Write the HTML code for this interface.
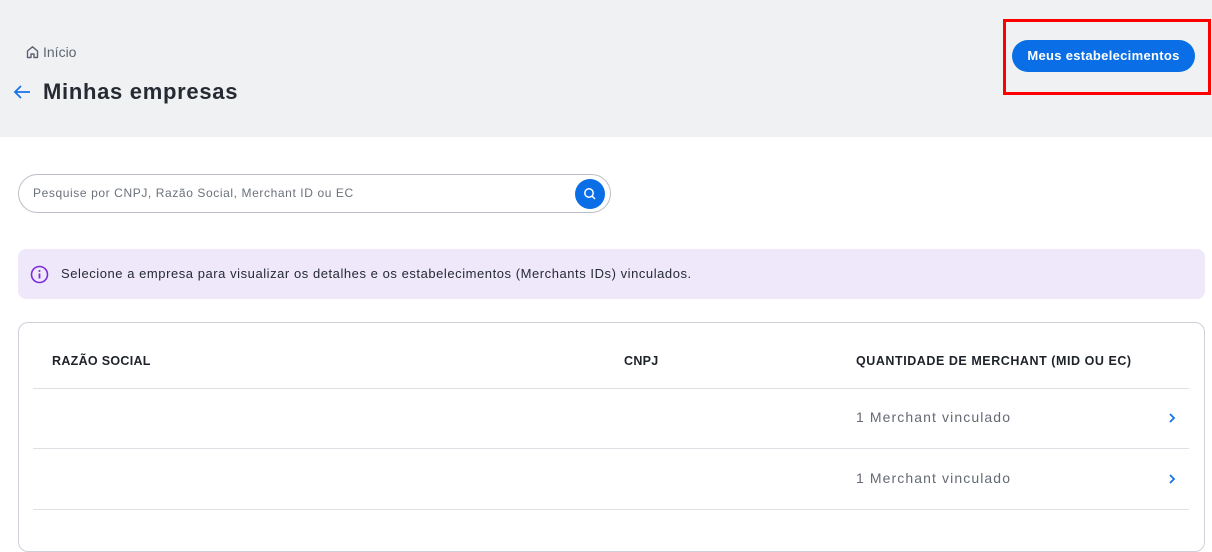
<!DOCTYPE html>
<html><head><meta charset="utf-8"><style>
*{box-sizing:border-box;margin:0;padding:0}
body{width:1212px;height:525px;overflow:hidden;background:#fff;font-family:"Liberation Sans",sans-serif;position:relative}
.hdr{position:absolute;left:0;top:0;width:1212px;height:137px;background:#f0f1f3}
.abs{position:absolute;white-space:nowrap}
</style></head><body>
<div class="hdr"></div>
<svg class="abs" style="left:26px;top:45px" width="13" height="14" viewBox="0 0 13 14"><path d="M1.5 6 L6.5 1.8 L11.5 6 V12.5 H8 V9 H5 V12.5 H1.5 Z" fill="none" stroke="#5a6270" stroke-width="1.4" stroke-linejoin="round"/></svg>
<div class="abs" style="left:43px;top:44px;font-size:14px;color:#5e6672">Início</div>
<svg class="abs" style="left:13px;top:84px" width="18" height="16" viewBox="0 0 18 16"><path d="M17 8 H2 M8 2 L2 8 L8 14" fill="none" stroke="#1a73e8" stroke-width="1.8"/></svg>
<div class="abs" style="left:43px;top:79px;font-size:22px;font-weight:bold;color:#252a33;letter-spacing:0.7px">Minhas empresas</div>
<div class="abs" style="left:1003px;top:19px;width:208px;height:76px;border:3px solid #f00"></div>
<div class="abs" style="left:1012px;top:40px;width:183px;height:32px;border-radius:16px;background:#0a6fe6;color:#fff;font-size:13px;font-weight:bold;text-align:center;line-height:32px;letter-spacing:0.3px">Meus estabelecimentos</div>
<div class="abs" style="left:18px;top:174px;width:593px;height:39px;border:1px solid #b9bec6;border-radius:20px"></div>
<div class="abs" style="left:33px;top:186px;font-size:12px;color:#6b717b;letter-spacing:0.6px">Pesquise por CNPJ, Razão Social, Merchant ID ou EC</div>
<div class="abs" style="left:575px;top:179px;width:30px;height:30px;border-radius:50%;background:#0a6fe6"></div>
<svg class="abs" style="left:583px;top:187px" width="14" height="14" viewBox="0 0 14 14"><circle cx="6" cy="6" r="4.2" fill="none" stroke="#fff" stroke-width="1.5"/><path d="M9 9 L12 12" stroke="#fff" stroke-width="1.5"/></svg>
<div class="abs" style="left:18px;top:249px;width:1187px;height:50px;border-radius:8px;background:#efe8fb"></div>
<svg class="abs" style="left:30px;top:265px" width="19" height="19" viewBox="0 0 19 19"><circle cx="9.5" cy="9.5" r="8" fill="none" stroke="#7a2dd6" stroke-width="1.6"/><path d="M9.5 8.5 V13.5" stroke="#7a2dd6" stroke-width="1.8"/><circle cx="9.5" cy="6" r="1" fill="#7a2dd6"/></svg>
<div class="abs" style="left:61px;top:266px;font-size:13px;color:#252a33;letter-spacing:0.55px">Selecione a empresa para visualizar os detalhes e os estabelecimentos (Merchants IDs) vinculados.</div>
<div class="abs" style="left:18px;top:322px;width:1187px;height:230px;border:1px solid #cdd1d8;border-radius:10px"></div>
<div class="abs" style="left:52px;top:354px;font-size:12.5px;font-weight:bold;color:#1e2229;letter-spacing:0.3px">RAZÃO SOCIAL</div>
<div class="abs" style="left:624px;top:354px;font-size:12.5px;font-weight:bold;color:#1e2229;letter-spacing:0.3px">CNPJ</div>
<div class="abs" style="left:856px;top:354px;font-size:12.5px;font-weight:bold;color:#1e2229;letter-spacing:0.55px">QUANTIDADE DE MERCHANT (MID OU EC)</div>
<div class="abs" style="left:33px;top:388px;width:1156px;height:1px;background:#dde0e5"></div>
<div class="abs" style="left:856px;top:409px;font-size:14px;color:#646a74;letter-spacing:1.1px">1 Merchant vinculado</div>
<svg class="abs" style="left:1168px;top:412px" width="8" height="12" viewBox="0 0 8 12"><path d="M2 2 L6 6 L2 10" fill="none" stroke="#1a73e8" stroke-width="1.8"/></svg>
<div class="abs" style="left:33px;top:448px;width:1156px;height:1px;background:#dde0e5"></div>
<div class="abs" style="left:856px;top:470px;font-size:14px;color:#646a74;letter-spacing:1.1px">1 Merchant vinculado</div>
<svg class="abs" style="left:1168px;top:473px" width="8" height="12" viewBox="0 0 8 12"><path d="M2 2 L6 6 L2 10" fill="none" stroke="#1a73e8" stroke-width="1.8"/></svg>
<div class="abs" style="left:33px;top:509px;width:1156px;height:1px;background:#dde0e5"></div>
</body></html>
